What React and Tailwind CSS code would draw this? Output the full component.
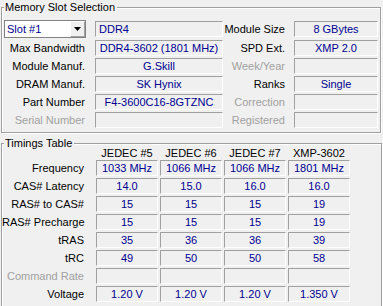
import React from 'react'

function Box({ className = '', children }) {
    return (
        <div className={`h-[16px] flex items-center border border-t-[#a0a0a0] border-l-[#a0a0a0] border-b-white border-r-white text-[#000090] whitespace-nowrap overflow-hidden ${className}`}>
            {children}
        </div>
    )
}

function Label({ dim, className = '', children }) {
    return (
        <div className={`text-right whitespace-nowrap ${dim ? 'text-[#a0a0a0]' : 'text-black'} ${className}`}>
            {children}
        </div>
    )
}

function Group({ title, className = '', children }) {
    return (
        <fieldset className={`border border-[#a0a0a0] shadow-[inset_1px_1px_0_#fff,1px_1px_0_#fff] ${className}`}>
            <legend className="ml-[2px] pl-[1px] pr-[2px] leading-[14px] bg-[#f0f0f0] text-black">{title}</legend>
            {children}
        </fieldset>
    )
}

const slotRows = [
    { label: 'Max Bandwidth', value: 'DDR4-3602 (1801 MHz)', label2: 'SPD Ext.', value2: 'XMP 2.0' },
    { label: 'Module Manuf.', value: 'G.Skill', label2: 'Week/Year', dim2: true, value2: '' },
    { label: 'DRAM Manuf.', value: 'SK Hynix', label2: 'Ranks', value2: 'Single' },
    { label: 'Part Number', value: 'F4-3600C16-8GTZNC', label2: 'Correction', dim2: true, value2: '' },
    { label: 'Serial Number', dim: true, value: '', label2: 'Registered', dim2: true, value2: '' },
]

const headers = ['JEDEC #5', 'JEDEC #6', 'JEDEC #7', 'XMP-3602']

const timings = [
    { label: 'Frequency', values: ['1033 MHz', '1066 MHz', '1066 MHz', '1801 MHz'] },
    { label: 'CAS# Latency', values: ['14.0', '15.0', '16.0', '16.0'] },
    { label: 'RAS# to CAS#', values: ['15', '15', '15', '19'] },
    { label: 'RAS# Precharge', values: ['15', '15', '15', '19'] },
    { label: 'tRAS', values: ['35', '36', '36', '39'] },
    { label: 'tRC', values: ['49', '50', '50', '58'] },
    { label: 'Command Rate', dim: true, values: ['', '', '', ''] },
    { label: 'Voltage', values: ['1.20 V', '1.20 V', '1.20 V', '1.350 V'] },
]

export default function App() {
    return (
        <div className="w-[383px] h-[306px] overflow-hidden bg-[#f0f0f0] text-[11px] leading-[13px] font-['Liberation_Sans',Arial,sans-serif]">
            <Group title="Memory Slot Selection" className="ml-[1px] w-[380px] pt-[6px] pb-[4px]">
                <div className="flex items-center h-[18px]">
                    <div className="w-[84px] pl-[2px]">
                        <div className="w-[82px] h-[18px] flex border border-[#828282] bg-white">
                            <span className="flex-1 pl-[2px] flex items-center text-[#000090]">Slot #1</span>
                            <span className="w-[15px] flex items-center justify-center bg-[#f0f0f0] border border-t-white border-l-white border-b-[#a0a0a0] border-r-[#a0a0a0]">
                                <svg width="7" height="4" viewBox="0 0 7 4"><path d="M0 0h7L3.5 4z" fill="#000" /></svg>
                            </span>
                        </div>
                    </div>
                    <Box className="ml-[9px] w-[128px] pl-[3px]">DDR4</Box>
                    <Label className="w-[63px] pr-[1px]">Module Size</Label>
                    <Box className="ml-[8px] w-[84px] justify-center">8 GBytes</Box>
                </div>
                {slotRows.map(r => (
                    <div key={r.label} className="flex items-center h-[16px] mt-[2px]">
                        <Label dim={r.dim} className="w-[84px] pr-[1px]">{r.label}</Label>
                        <Box className="ml-[9px] w-[128px] justify-center">{r.value}</Box>
                        <Label dim={r.dim2} className="w-[63px] pr-[1px]">{r.label2}</Label>
                        <Box className="ml-[8px] w-[84px] justify-center">{r.value2}</Box>
                    </div>
                ))}
            </Group>

            <Group title="Timings Table" className="ml-[1px] mt-[3px] w-[381px] pb-[10px]">
                <div className="flex h-[14px] -mt-[4px] items-center">
                    <div className="w-[84px]" />
                    <div className="ml-[10px] flex gap-[2px]">
                        {headers.map(h => (
                            <div key={h} className="w-[62px] text-center text-black whitespace-nowrap">{h}</div>
                        ))}
                    </div>
                </div>
                {timings.map((r, i) => (
                    <div key={r.label} className={`flex items-center h-[16px] ${i ? 'mt-[2px]' : ''}`}>
                        <Label dim={r.dim} className="w-[84px] pr-[2px]">{r.label}</Label>
                        <div className="ml-[10px] flex gap-[2px]">
                            {r.values.map((v, j) => (
                                <Box key={j} className="w-[62px] justify-center">{v}</Box>
                            ))}
                        </div>
                    </div>
                ))}
            </Group>
        </div>
    )
}
